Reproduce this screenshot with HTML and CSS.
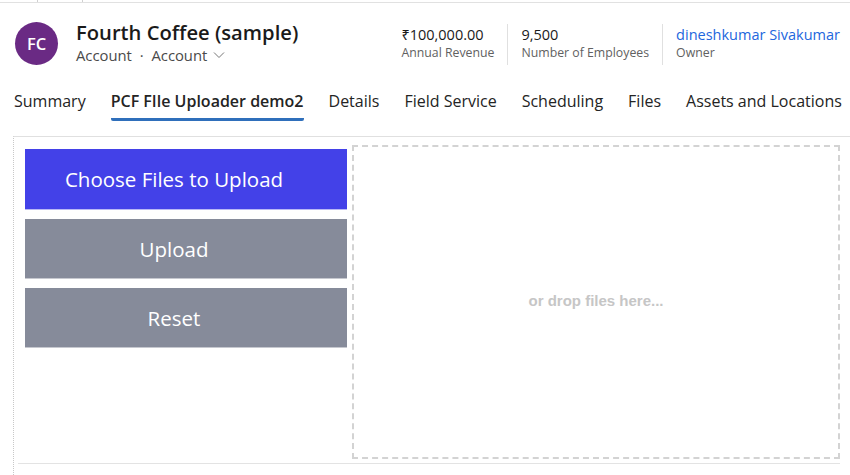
FILE: index.html
```html
<!DOCTYPE html>
<html lang="en">
<head>
<meta charset="utf-8">
<title>Fourth Coffee (sample)</title>
<link rel="stylesheet" href="styles.css">
</head>
<body>
<div class="topstrip">
  <span class="tick t1"></span>
  <span class="tick t2"></span>
</div>
<header class="header">
  <div class="avatar">FC</div>
  <div class="titleblock">
    <div class="title">Fourth Coffee (sample)</div>
    <div class="subtitle">Account <span class="dot">·</span> Account
      <svg class="chev" width="12" height="8" viewBox="0 0 12 8"><path d="M1 1.5 L6 6.5 L11 1.5" fill="none" stroke="#777" stroke-width="1"/></svg>
    </div>
  </div>
  <div class="fields">
    <div class="field">
      <div class="fval">₹100,000.00</div>
      <div class="flabel">Annual Revenue</div>
    </div>
    <div class="field">
      <div class="fval">9,500</div>
      <div class="flabel">Number of Employees</div>
    </div>
    <div class="field last">
      <div class="fval link">dineshkumar Sivakumar</div>
      <div class="flabel">Owner</div>
    </div>
  </div>
</header>
<nav class="tabs">
  <span class="tab">Summary</span>
  <span class="tab active">PCF FIle Uploader demo2</span>
  <span class="tab">Details</span>
  <span class="tab">Field Service</span>
  <span class="tab">Scheduling</span>
  <span class="tab">Files</span>
  <span class="tab">Assets and Locations</span>
</nav>
<main class="section">
  <div class="uploader">
    <div class="buttons">
      <button class="btn choose">Choose Files to Upload</button>
      <button class="btn gray">Upload</button>
      <button class="btn gray">Reset</button>
    </div>
    <div class="dropzone">or drop files here...</div>
  </div>
  <div class="bottomline"></div>
</main>
</body>
</html>
```
FILE: styles.css
```css
html, body {
  margin: 0;
  padding: 0;
  background: #ffffff;
  font-family: "Open Sans", "Noto Sans", sans-serif;
  color: #242424;
  overflow: hidden;
}
.topstrip {
  position: relative;
  height: 2px;
  border-bottom: 1px solid #e1e1e1;
}
.tick {
  position: absolute;
  top: 0;
  width: 1px;
  height: 2px;
  background: #d0d0d0;
}
.t1 { left: 37px; }
.t2 { left: 82px; }
.header {
  display: flex;
  align-items: flex-start;
  height: 77px;
  padding-left: 15px;
}
.avatar {
  margin-top: 19px;
  width: 43px;
  height: 43px;
  border-radius: 50%;
  background: #6a2a84;
  color: #fff;
  font-size: 16.5px;
  font-weight: 600;
  display: flex;
  align-items: center;
  justify-content: center;
}
.titleblock {
  margin-left: 18px;
  margin-top: 15px;
}
.title {
  font-size: 20.2px;
  font-weight: 600;
  line-height: 28px;
  color: #1a1a1a;
}
.subtitle {
  font-size: 14.8px;
  line-height: 18px;
  color: #4a4a4a;
}
.dot { margin: 0 4px; }
.chev { margin-left: 2px; vertical-align: 2px; }
.fields {
  display: flex;
  margin-left: auto;
  margin-top: 21px;
}
.field {
  padding: 0 13px 0 13px;
  border-right: 1px solid #e0e0e0;
  height: 41px;
}
.field.last { border-right: none; padding-right: 10px; }
.fval {
  font-size: 14.5px;
  line-height: 21px;
  color: #1a1a1a;
}
.fval.link { color: #2266dd; }
.flabel {
  font-size: 12.3px;
  line-height: 16px;
  color: #616161;
}
.tabs {
  display: flex;
  gap: 25px;
  padding-left: 14px;
  height: 56px;
  align-items: flex-start;
}
.tab {
  font-size: 16px;
  line-height: 22px;
  padding-top: 10px;
  padding-bottom: 6px;
  color: #242424;
  white-space: nowrap;
}
.tab.active {
  font-weight: 600;
  border-bottom: 3px solid #2f6fbb;
  border-radius: 0 0 2px 2px;
}
.section {
  margin-left: 13px;
  border-top: 1px solid #e0e0e0;
  border-left: 1px dotted #c8c8c8;
  height: 340px;
}
.uploader {
  display: flex;
  padding: 8px 10px 0 11px;
}
.buttons {
  width: 322px;
  display: flex;
  flex-direction: column;
  gap: 9px;
  padding-top: 4px;
}
.btn {
  border: none;
  margin: 0;
  height: 60px;
  color: #fff;
  font-family: "Open Sans", "Noto Sans", sans-serif;
  font-size: 20.5px;
  padding: 0 24px 0 0;
  cursor: pointer;
}
.btn.choose {
  height: 61px;
  background: #4341e8;
  border-bottom: 1px solid #b9b8f5;
}
.btn.gray {
  background: #868b9a;
  border-bottom: 1px solid #c6c8cf;
}
.dropzone {
  flex: 1;
  margin-left: 5px;
  height: 306px;
  padding-bottom: 4px;
  box-sizing: content-box;
  border: 2px dashed #d3d3d3;
  display: flex;
  align-items: center;
  justify-content: center;
  font-family: "Liberation Sans", Arial, sans-serif;
  font-weight: bold;
  font-size: 15px;
  color: #c6c6c6;
}
.bottomline {
  margin: 4px 10px 0 4px;
  border-top: 1px solid #e3e3e3;
}
```
